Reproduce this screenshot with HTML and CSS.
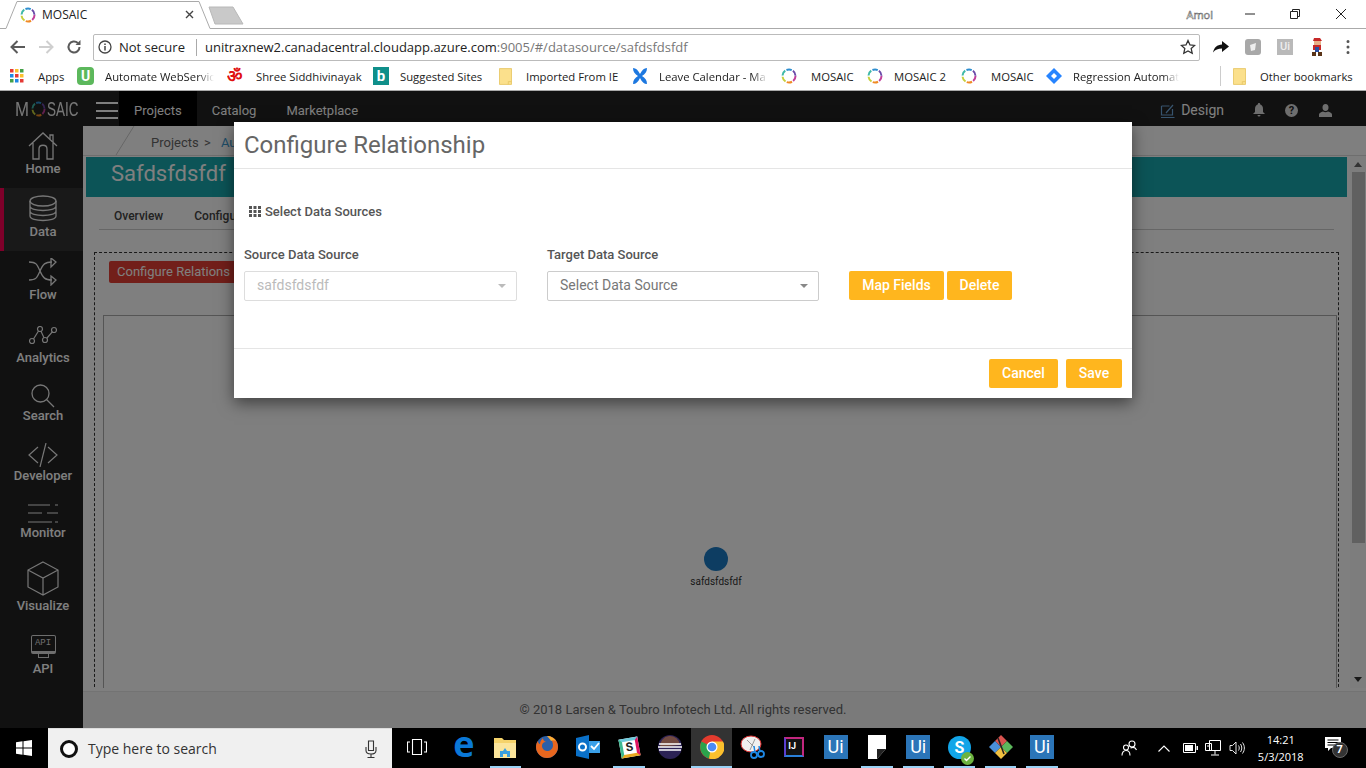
FILE: index.html
```html
<!DOCTYPE html>
<html lang="en">
<head>
    <meta charset="UTF-8">
    <title>MOSAIC</title>
    <link rel="stylesheet" href="styles.css">
</head>
<body>
    <svg class="defs" width="0" height="0">
        <symbol id="ring" viewBox="0 0 16 16">
            <g fill="none" stroke-width="2">
                <circle cx="8" cy="8" r="6.500" stroke="#c2409a" stroke-dasharray="5.500 35.500"/>
                <circle cx="8" cy="8" r="6.500" stroke="#f08a24" stroke-dasharray="5.500 35.500" stroke-dashoffset="-6.800"/>
                <circle cx="8" cy="8" r="6.500" stroke="#c6cf3a" stroke-dasharray="5.500 35.500" stroke-dashoffset="-13.600"/>
                <circle cx="8" cy="8" r="6.500" stroke="#3fb8a8" stroke-dasharray="5.500 35.500" stroke-dashoffset="-20.400"/>
                <circle cx="8" cy="8" r="6.500" stroke="#2f8fd0" stroke-dasharray="5.500 35.500" stroke-dashoffset="-27.200"/>
                <circle cx="8" cy="8" r="6.500" stroke="#6a4aa8" stroke-dasharray="5.500 35.500" stroke-dashoffset="-34"/>
            </g>
        </symbol>
        <symbol id="folder" viewBox="0 0 14 18">
            <path d="M.5 .5h13v17H.5z" fill="#fbe08c" stroke="#e8c868"/>
            <path d="M10 17.500v-3h3.500" fill="none" stroke="#e8c868"/>
        </symbol>
    </svg>

    <!-- browser window -->
    <header class="browser">
        <div class="tabstrip">
            <div class="tab">
                <svg class="tab-shape" width="207" height="29" viewBox="0 0 207 29"><path d="M0 28.500h1L12 1.500h182L205 28.500h2V29H0z" fill="#fff"/><path d="M0 28.500h1L12 1.500h182L205 28.500h2" fill="none" stroke="#aaa"/></svg>
                <svg class="tab-icon" width="16" height="16"><use href="#ring"/></svg>
                <span class="tab-title">MOSAIC</span>
                <svg class="tab-close" width="9" height="9" viewBox="0 0 9 9"><path d="M1 1l7 7M8 1L1 8" stroke="#444" stroke-width="1.400"/></svg>
            </div>
            <svg class="newtab" width="36" height="19" viewBox="0 0 36 19"><path d="M1 1h24l10 17H7z" fill="#c9c9c9" stroke="#b8b8b8"/></svg>
            <div class="window-controls">
                <span class="user-name">Amol</span>
                <svg width="12" height="12" viewBox="0 0 12 12" class="win-min"><path d="M1 6h10" stroke="#222"/></svg>
                <svg width="12" height="12" viewBox="0 0 12 12" class="win-max"><path d="M1.500 3.500h7v7h-7zM3.500 3.500v-2h7v7h-2" fill="none" stroke="#222"/></svg>
                <svg width="12" height="12" viewBox="0 0 12 12" class="win-close"><path d="M1 1l10 10M11 1L1 11" stroke="#222"/></svg>
            </div>
        </div>

        <div class="toolbar">
            <svg class="nav-arrow" width="16" height="14" viewBox="0 0 16 14"><path d="M15 7H2M7.500 1L1.500 7l6 6" fill="none" stroke="#5a5a5a" stroke-width="2"/></svg>
            <svg class="nav-arrow" width="16" height="14" viewBox="0 0 16 14"><path d="M1 7h13M8.500 1l6 6-6 6" fill="none" stroke="#cfcfcf" stroke-width="2"/></svg>
            <svg class="nav-arrow" width="16" height="16" viewBox="0 0 16 16"><path d="M13.500 8a5.500 5.500 0 1 1-1.700-4" fill="none" stroke="#5a5a5a" stroke-width="2"/><path d="M14.500 1v5h-5z" fill="#5a5a5a"/></svg>
            <div class="omnibox">
                <svg width="14" height="14" viewBox="0 0 14 14"><circle cx="7" cy="7" r="6" fill="none" stroke="#444" stroke-width="1.300"/><path d="M7 6v4.500M7 3.400v1.500" stroke="#444" stroke-width="1.500"/></svg>
                <span class="not-secure">Not secure</span>
                <span class="omni-sep"></span>
                <span class="url">unitraxnew2.canadacentral.cloudapp.azure.com<span class="url-rest">:9005/#/datasource/safdsfdsfdf</span></span>
                <svg class="omni-star" width="16" height="16" viewBox="0 0 16 16"><path d="M8 1.500l2 4.400 4.700.5-3.500 3.200 1 4.700L8 11.900l-4.200 2.400 1-4.700L1.300 6.400 6 5.900z" fill="none" stroke="#333" stroke-width="1.300"/></svg>
            </div>
            <div class="extensions">
                <svg width="16" height="12" viewBox="0 0 16 12"><path d="M9 0l7 5.500L9 11V7.500C5 7.500 2.500 8.500 0 11.500 1 6.500 4 3.800 9 3.500z" fill="#111"/></svg>
                <svg width="16" height="16" viewBox="0 0 16 16"><rect width="16" height="16" rx="3" fill="#a8a8a8"/><path d="M5 6l6-2-1 7-4 1z" fill="#eee"/></svg>
                <span class="ext-ui">Ui</span>
                <svg width="14" height="20" viewBox="0 0 14 20"><path d="M4 1h6l2 3H3z" fill="#c62828"/><path d="M4 4h7v4H4z" fill="#e8b088"/><path d="M3 8h8v5H3z" fill="#c62828"/><path d="M5 10h4v5H5z" fill="#2b4fa0"/><path d="M2 15h4v4H2zM8 15h4v4H8z" fill="#5a3418"/></svg>
                <svg width="4" height="14" viewBox="0 0 4 14"><path d="M2 0a1.500 1.500 0 1 1 0 3 1.500 1.500 0 1 1 0-3zM2 5.500a1.500 1.500 0 1 1 0 3 1.500 1.500 0 1 1 0-3zM2 11a1.500 1.500 0 1 1 0 3 1.500 1.500 0 1 1 0-3z" fill="#555"/></svg>
            </div>
        </div>

        <div class="bookmarks">
            <div class="bm">
                <svg width="14" height="14" viewBox="0 0 14 14">
                    <path d="M0 0h3.500v3.500H0z" fill="#e53935"/><path d="M5 0h3.500v3.500H5z" fill="#fbc02d"/><path d="M10 0h3.500v3.500H10z" fill="#43a047"/>
                    <path d="M0 5h3.500v3.500H0z" fill="#1e88e5"/><path d="M5 5h3.500v3.500H5z" fill="#e53935"/><path d="M10 5h3.500v3.500H10z" fill="#fbc02d"/>
                    <path d="M0 10h3.500v3.500H0z" fill="#43a047"/><path d="M5 10h3.500v3.500H5z" fill="#1e88e5"/><path d="M10 10h3.500v3.500H10z" fill="#e53935"/>
                </svg>
                <span class="bm-apps">Apps</span>
            </div>
            <div class="bm"><span class="bm-u">U</span><span class="fade fade-automate">Automate WebServic</span></div>
            <div class="bm"><span class="bm-om">ॐ</span><span>Shree Siddhivinayak</span></div>
            <div class="bm"><span class="bm-bing">b</span><span>Suggested Sites</span></div>
            <div class="bm"><svg width="13" height="17"><use href="#folder"/></svg><span class="bm-folder-text">Imported From IE</span></div>
            <div class="bm">
                <svg width="16" height="18" viewBox="0 0 16 18"><path d="M1 1c3 0 5 2 7 6 2-4 4-6 7-6 0 4-2 6-5 8 3 2 5 4 5 8-3 0-5-2-7-6-2 4-4 6-7 6 0-4 2-6 5-8C3 7 1 5 1 1z" fill="#1d78e0"/></svg>
                <span class="fade fade-leave">Leave Calendar - Ma</span>
            </div>
            <div class="bm"><svg width="16" height="16"><use href="#ring"/></svg><span class="bm-m">MOSAIC</span></div>
            <div class="bm"><svg width="16" height="16"><use href="#ring"/></svg><span>MOSAIC 2</span></div>
            <div class="bm"><svg width="16" height="16"><use href="#ring"/></svg><span class="bm-m">MOSAIC</span></div>
            <div class="bm">
                <svg width="16" height="16" viewBox="0 0 16 16"><path d="M8 0l8 8-8 8-8-8z" fill="#2684ff"/><path d="M8 5l3 3-3 3-3-3z" fill="#fff"/></svg>
                <span class="fade fade-regression">Regression Automat</span>
            </div>
            <span class="bm-sep"></span>
            <div class="bm"><svg width="13" height="17"><use href="#folder"/></svg><span class="bm-folder-text">Other bookmarks</span></div>
        </div>
    </header>

    <!-- application -->
    <div class="app">
        <nav class="navbar">
            <div class="brand">
                <span class="brand-m">M</span>
                <svg width="15" height="16" viewBox="0 0 16 16" preserveAspectRatio="none"><use href="#ring"/></svg>
                <span class="brand-saic">SAIC</span>
            </div>
            <div class="burger"><span></span><span></span><span></span></div>
            <a class="nav-link active">Projects</a>
            <a class="nav-link">Catalog</a>
            <a class="nav-link">Marketplace</a>
            <div class="nav-right">
                <svg width="15" height="15" viewBox="0 0 15 15"><path d="M1 14.500h13.500M1.500 3h8M1.500 3v9h11V6M6 10l7-8" fill="none" stroke="#6fa8dc" stroke-width="1.200"/></svg>
                <span class="design">Design</span>
                <svg class="bell" width="12" height="14" viewBox="0 0 12 14"><path d="M6 0a1 1 0 0 1 1 1.300C9 2 10 3.500 10 6v3l2 2H0l2-2V6c0-2.500 1-4 3-4.700A1 1 0 0 1 6 0zM4.500 12h3a1.500 1.500 0 0 1-3 0z" fill="#ddd"/></svg>
                <span class="help">?</span>
                <svg class="person" width="13" height="13" viewBox="0 0 13 13"><path d="M6.500 0C8.500 0 9.500 1.500 9.500 3.500S8.500 7 6.500 7 3.500 5.500 3.500 3.500 4.500 0 6.500 0zM4 7.500c1.500 1 3.500 1 5 0 2 .5 4 1.500 4 3V13H0v-2.500c0-1.500 2-2.500 4-3z" fill="#ddd"/></svg>
            </div>
        </nav>

        <div class="app-body">
            <aside class="sidebar">
                <a class="side-item">
                    <svg width="30" height="28" viewBox="0 0 30 28"><path d="M1 14L15 1l14 13M5 11v16h6V17c0-5 8-5 8 0v10h6V11" fill="none" stroke="#eee" stroke-width="1.300"/><path d="M22 7V3h3v7" fill="none" stroke="#eee" stroke-width="1.300"/></svg>
                    <span>Home</span>
                </a>
                <a class="side-item side-active">
                    <svg width="28" height="28" viewBox="0 0 28 28"><g fill="none" stroke="#eee" stroke-width="1.300"><ellipse cx="14" cy="6" rx="13" ry="5"/><path d="M1 6v5c0 6 26 6 26 0V6M1 11v5c0 6 26 6 26 0v-5M1 16v5c0 6 26 6 26 0v-5"/></g></svg>
                    <span>Data</span>
                </a>
                <a class="side-item">
                    <svg width="28" height="28" viewBox="0 0 28 28"><g fill="none" stroke="#eee" stroke-width="1.300"><path d="M0 4c7 0 8 2 11 9 3 7 5 9 12 9M0 22c7 0 8-2 11-9 3-7 5-9 12-9"/><path d="M22 0l5 4-5 5zM22 18l5 4-5 5z"/></g></svg>
                    <span>Flow</span>
                </a>
                <a class="side-item side-analytics">
                    <svg width="28" height="19" viewBox="0 0 28 19"><g fill="none" stroke="#eee" stroke-width="1.200"><circle cx="3" cy="15" r="2.500"/><circle cx="11" cy="3" r="2.500"/><circle cx="16" cy="14" r="2.500"/><circle cx="25" cy="4" r="2.500"/><path d="M4.500 13L9.500 5M12 5.300l3 6.500M18 12l5.500-6.300"/></g></svg>
                    <span>Analytics</span>
                </a>
                <a class="side-item side-search">
                    <svg width="24" height="24" viewBox="0 0 24 24"><g fill="none" stroke="#eee" stroke-width="1.300"><circle cx="9.500" cy="9.500" r="8.500"/><path d="M15.500 15.500L23 23"/></g></svg>
                    <span>Search</span>
                </a>
                <a class="side-item side-developer">
                    <svg width="30" height="24" viewBox="0 0 30 24"><path d="M10 4L1 12l9 8M20 4l9 8-9 8M18 0l-6 24" fill="none" stroke="#eee" stroke-width="1.200"/></svg>
                    <span>Developer</span>
                </a>
                <a class="side-item side-monitor">
                    <svg width="30" height="19" viewBox="0 0 30 19"><path d="M0 1h22M27 1h3M0 9h14M19 9h11M0 18h24M27 18h3" fill="none" stroke="#eee" stroke-width="1.200"/></svg>
                    <span>Monitor</span>
                </a>
                <a class="side-item side-visualize">
                    <svg width="32" height="35" viewBox="0 0 32 35"><path d="M16 1l15 8v17l-15 8-15-8V9zM1 9l15 8 15-8M16 17v17" fill="none" stroke="#eee" stroke-width="1.200"/></svg>
                    <span>Visualize</span>
                </a>
                <a class="side-item side-api">
                    <div class="api-icon">
                        <div class="api-screen">API</div>
                        <div class="api-stand"></div>
                    </div>
                    <span>API</span>
                </a>
            </aside>

            <div class="main">
                <div class="crumb">
                    <svg class="crumb-slash" width="20" height="29" viewBox="0 0 20 29"><path d="M19 0L1 29" stroke="#ccc"/></svg>
                    <span class="crumb-text">Projects &gt;</span>
                    <span class="crumb-link">Au</span>
                </div>
                <div class="scroll-area">
                    <div class="page">
                        <div class="banner">Safdsfdsfdf</div>
                        <div class="tabs">
                            <a class="tab-link">Overview</a>
                            <a class="tab-link">Configu</a>
                        </div>
                        <div class="relations">
                            <button class="btn-red">Configure Relations</button>
                            <div class="graph">
                                <div class="node">
                                    <span class="node-dot"></span>
                                    <span class="node-label">safdsfdsfdf</span>
                                </div>
                            </div>
                        </div>
                    </div>
                    <div class="scrollbar">
                        <span class="arrow-up"></span>
                        <span class="thumb"></span>
                        <span class="arrow-down"></span>
                    </div>
                </div>
                <footer class="footer">© 2018 Larsen &amp; Toubro Infotech Ltd. All rights reserved.</footer>
            </div>
        </div>

        <div class="backdrop"></div>

        <section class="modal">
            <div class="modal-header">Configure Relationship</div>
            <div class="modal-body">
                <div class="section-title">
                    <svg width="12" height="11" viewBox="0 0 12 11"><path d="M0 0h3v3H0zM4.500 0h3v3h-3zM9 0h3v3H9zM0 4h3v3H0zM4.500 4h3v3h-3zM9 4h3v3H9zM0 8h3v3H0zM4.500 8h3v3h-3zM9 8h3v3H9z" fill="#555"/></svg>
                    Select Data Sources
                </div>
                <div class="form-row">
                    <div class="field">
                        <label>Source Data Source</label>
                        <div class="select select-disabled">safdsfdsfdf<span class="caret"></span></div>
                    </div>
                    <div class="field">
                        <label>Target Data Source</label>
                        <div class="select">Select Data Source<span class="caret"></span></div>
                    </div>
                    <div class="row-buttons">
                        <button class="btn btn-map">Map Fields</button>
                        <button class="btn btn-delete">Delete</button>
                    </div>
                </div>
            </div>
            <div class="modal-footer">
                <button class="btn btn-cancel">Cancel</button>
                <button class="btn btn-save">Save</button>
            </div>
        </section>
    </div>

    <!-- windows taskbar -->
    <div class="taskbar">
        <div class="start">
            <svg width="16" height="16" viewBox="0 0 16 16"><path d="M0 2.300l6.500-1v6.200H0zM7.500 1.200L16 0v7.500H7.500zM0 8.500h6.500v6.200l-6.500-1zM7.500 8.500H16V16l-8.500-1.200z" fill="#fff"/></svg>
        </div>
        <div class="search">
            <span class="cortana"></span>
            <span class="search-text">Type here to search</span>
            <svg class="mic" width="12" height="18" viewBox="0 0 12 18"><path d="M3.500 1h5v9.500h-5zM1 7v3.500C1 13 3 14 6 14s5-1 5-3.500V7M6 14v3M2.500 17.500h7" fill="none" stroke="#333" stroke-width="1.100"/></svg>
        </div>
        <div class="task-cell task-view">
            <svg width="20" height="16" viewBox="0 0 20 16"><path d="M5.500 .500h9v15h-9zM3 3H.5v10H3M17 3h2.500v10H17" fill="none" stroke="#fff" stroke-width="1.100"/></svg>
        </div>
        <div class="task-cell"><span class="edge-e">e</span></div>
        <div class="task-cell running">
            <svg width="22" height="22" viewBox="0 0 22 22"><path d="M0 2h8l2 2h12v18H0z" fill="#f5d36b"/><path d="M0 7h22v15H0z" fill="#fbe59b"/><path d="M6 21v-6h3l2-3 2 3h3v6h-3v-3H9v3z" fill="#3aa0e0"/></svg>
        </div>
        <div class="task-cell">
            <svg width="22" height="24" viewBox="0 0 22 24"><circle cx="11" cy="12" r="11" fill="#2b5fa8"/><path d="M11 1c7 0 11 5 11 11s-5 11-11 11C5 23 0 18 0 12c0-3 1-5 2-6 0 2 1 3 2 3 0-3 2-5 3-6 0 2 1 3 3 4-3 0-4 2-4 4s2 5 5 5 6-2 6-6-3-8-6-9z" fill="#e8661e"/><path d="M11 1c4 0 7 2 9 5-2-1-4-1-5 0-1-2-3-4-4-5z" fill="#fbb034"/></svg>
        </div>
        <div class="task-cell">
            <svg width="24" height="24" viewBox="0 0 24 24"><path d="M0 3l13-3v24L0 21z" fill="#0a70c8"/><path d="M13 6h11v12H13z" fill="#3aa0e8"/><circle cx="6.500" cy="12" r="3.500" fill="none" stroke="#fff" stroke-width="2"/><path d="M15 11l3 3 5-6" fill="none" stroke="#fff" stroke-width="1.800"/></svg>
        </div>
        <div class="task-cell running">
            <span class="slack-tile"><span>S</span></span>
        </div>
        <div class="task-cell">
            <svg width="24" height="24" viewBox="0 0 24 24"><circle cx="12" cy="12" r="12" fill="#2c2255"/><path d="M2 12a10 10 0 0 1 20-2z" fill="#f7941e" opacity=".35"/><path d="M1 9h22M0 12h24M1 15h22" stroke="#fff" stroke-width="1.500"/></svg>
        </div>
        <div class="task-cell task-active">
            <svg width="24" height="24" viewBox="0 0 24 24"><circle cx="12" cy="12" r="12" fill="#e33b2e"/><path d="M12 12L1.500 6.500A12 12 0 0 0 9 23.600z" fill="#2ba24c"/><path d="M12 6.500h11A12 12 0 0 1 9 23.600z" fill="#fbc02d"/><circle cx="12" cy="12" r="5.500" fill="#fff"/><circle cx="12" cy="12" r="4.300" fill="#4a8bf5"/></svg>
        </div>
        <div class="task-cell">
            <svg width="26" height="26" viewBox="0 0 26 26"><ellipse cx="11" cy="10" rx="10" ry="8" fill="#f0f0f0" stroke="#d33"/><path d="M7 6l8 8M15 5l-5 11" stroke="#999"/><circle cx="14" cy="21" r="3" fill="none" stroke="#1e88e5" stroke-width="1.800"/><circle cx="21" cy="20" r="3" fill="none" stroke="#1e88e5" stroke-width="1.800"/><path d="M14 12l1 7M19 12l1 6" stroke="#1e88e5" stroke-width="1.500"/></svg>
        </div>
        <div class="task-cell"><span class="ij-tile"><span>IJ</span></span></div>
        <div class="task-cell"><span class="ui-tile">Ui</span></div>
        <div class="task-cell running">
            <svg width="18" height="24" viewBox="0 0 18 24"><path d="M0 0h18v14L10 24H0z" fill="#fff"/><path d="M9 24l9-10v10z" fill="#000"/><path d="M9 24v-10h9z" fill="#222"/></svg>
        </div>
        <div class="task-cell running"><span class="ui-tile">Ui</span></div>
        <div class="task-cell running">
            <span class="skype"><span>S</span></span>
            <svg class="skype-ok" width="13" height="13" viewBox="0 0 13 13"><circle cx="6.500" cy="6.500" r="6.500" fill="#6cb33f"/><path d="M3.500 6.500l2 2 4-4" fill="none" stroke="#fff" stroke-width="1.400"/></svg>
        </div>
        <div class="task-cell running">
            <svg width="26" height="26" viewBox="0 0 26 26"><path d="M13 1l6 6-6 6-6-6z" fill="#d9534f"/><path d="M1 13l6-6 6 6-6 6z" fill="#4a90d9"/><path d="M25 13l-6-6-6 6 6 6z" fill="#5cb85c"/><path d="M13 25l-6-6 6-6 6 6z" fill="#f0c040"/><path d="M10 4l6 16" stroke="#222" stroke-width="1.500"/></svg>
        </div>
        <div class="task-cell running"><span class="ui-tile">Ui</span></div>

        <div class="tray">
            <svg class="tray-people" width="17" height="16" viewBox="0 0 17 16"><g fill="none" stroke="#fff" stroke-width="1.100"><circle cx="11" cy="4" r="3"/><circle cx="5" cy="7.500" r="2.500"/><path d="M1 15.500c0-3 1.500-5 4-5s4 2 4 5M9.500 8c2.500-1 5-.5 6 2"/></g></svg>
            <svg class="tray-chevron" width="12" height="7" viewBox="0 0 12 7"><path d="M.5 6.500L6 1l5.500 5.500" fill="none" stroke="#fff" stroke-width="1.100"/></svg>
            <svg class="tray-battery" width="15" height="10" viewBox="0 0 15 10"><path d="M.5 .5h12v9H.5z" fill="none" stroke="#fff"/><path d="M2 2h8v6H2zM13.500 3H15v4h-1.500z" fill="#fff"/></svg>
            <svg class="tray-net" width="16" height="16" viewBox="0 0 16 16"><path d="M4.500 .500h11v10h-11zM.5 3.500h6v7H.5zM10 10.500v4M6 15h8" fill="none" stroke="#fff"/><path d="M2 6h3" stroke="#fff"/></svg>
            <svg class="tray-sound" width="16" height="14" viewBox="0 0 16 14"><path d="M1 4.500h2.500L7 1v12L3.500 9.500H1zM9.500 4.500c1 1.500 1 3.500 0 5M11.500 3c1.700 2.500 1.700 5.500 0 8M13.500 1.500c2.500 3.500 2.500 7.500 0 11" fill="none" stroke="#fff" stroke-width=".9"/></svg>
            <div class="clock"><span>14:21</span><span>5/3/2018</span></div>
            <div class="notify">
                <svg width="16" height="15" viewBox="0 0 16 15"><path d="M0 0h16v11H6l-3 3v-3H0z" fill="#fff"/><path d="M2.500 3h11M2.500 5.500h11M2.500 8h11" stroke="#000"/></svg>
                <span class="notify-badge">7</span>
            </div>
        </div>
    </div>
</body>
</html>
```

FILE: styles.css
```css
* {
    box-sizing: border-box;
}

html, body {
    height: 100%;
}

body {
    margin: 0;
    width: 1366px;
    height: 768px;
    overflow: hidden;
    display: flex;
    flex-direction: column;
    font-family: "Open Sans", "Noto Sans", sans-serif;
    background: #fff;
}

.defs {
    position: absolute;
}

/* browser window */
.browser {
    height: 91px;
    flex: none;
    color: #222;
}

.tabstrip {
    height: 29px;
    display: flex;
    align-items: flex-start;
    border-bottom: 1px solid #aaa;
}

.tab {
    position: relative;
    width: 207px;
    height: 29px;
    margin-left: 5px;
    display: flex;
    align-items: center;
    padding: 0 0 0 15px;
}

.tab-shape {
    position: absolute;
    left: 0;
    top: 0;
}

.tab-icon, .tab-title, .tab-close {
    position: relative;
}

.tab-title {
    margin-left: 6px;
    font-size: 12px;
    width: 126px;
}

.tab-close {
    margin-left: 17px;
}

.newtab {
    margin: 6px 0 0 -4px;
}

.window-controls {
    margin-left: auto;
    display: flex;
    align-items: center;
    height: 28px;
}

.user-name {
    font-size: 11px;
    color: #fff;
    -webkit-text-stroke: .5px #555;
    margin-right: 31px;
}

.win-min {
    margin-right: 33px;
}

.win-max {
    margin-right: 34px;
}

.win-close {
    margin-right: 19px;
}

.toolbar {
    height: 33px;
    display: flex;
    align-items: center;
    padding: 3px 0 0 10px;
}

.nav-arrow {
    margin-right: 12px;
}

.nav-arrow:nth-child(3) {
    margin-right: 11px;
}

.omnibox {
    width: 1107px;
    height: 27px;
    border: 1px solid #bbb;
    border-radius: 2px;
    display: flex;
    align-items: center;
    padding-left: 4px;
    font-size: 13px;
}

.not-secure {
    margin-left: 7px;
    width: 67px;
    white-space: nowrap;
}

.omni-sep {
    width: 1px;
    height: 17px;
    background: #aaa;
    margin: 0 8px 0 10px;
}

.url {
    color: #222;
    white-space: nowrap;
}

.url-rest {
    color: #777;
}

.omni-star {
    margin-left: auto;
    margin-right: 3px;
}

.extensions {
    display: grid;
    grid-template-columns: 32px 32px 32px 32px 30px;
    justify-items: center;
    align-items: center;
    margin-left: 5px;
}

.ext-ui {
    width: 16px;
    height: 16px;
    background: #b9b9b9;
    color: #eee;
    font: 500 11px Roboto, sans-serif;
    text-align: center;
    line-height: 16px;
}

.bookmarks {
    height: 29px;
    border-bottom: 1px solid #aaa;
    display: grid;
    grid-template-columns: 67px 150px 146px 126px 133px 149px 86px 94px 85px 174px 13px auto;
    align-items: center;
    padding-left: 10px;
    font-size: 11.300px;
}

.bm {
    display: flex;
    align-items: center;
    gap: 11px;
    white-space: nowrap;
}

.bm-apps {
    margin-left: 3px;
}

.bm-folder-text {
    margin-left: 3px;
}

.bm-m {
    margin-left: 3px;
}

.bm-u {
    width: 17px;
    height: 18px;
    background: #5cb85c;
    color: #fff;
    border-radius: 4px;
    text-align: center;
    font: 700 14px/18px Roboto, sans-serif;
}

.bm-om {
    width: 18px;
    color: #e01010;
    font: 700 17px/18px "DejaVu Sans", sans-serif;
    overflow: hidden;
}

.bm-bing {
    width: 16px;
    height: 18px;
    background: #0f8f8a;
    color: #fff;
    text-align: center;
    font: 700 15px/18px Roboto, sans-serif;
}

.fade {
    -webkit-mask-image: linear-gradient(to right, #000 85%, transparent);
    mask-image: linear-gradient(to right, #000 85%, transparent);
}

.fade-automate {
    width: 109px;
}

.fade-leave {
    width: 109px;
}

.fade-regression {
    width: 106px;
}

.bm-sep {
    width: 1px;
    height: 20px;
    background: #ccc;
}

/* application */
.app {
    position: relative;
    flex: none;
    height: 637px;
    display: flex;
    flex-direction: column;
    font-family: Roboto, sans-serif;
}

.navbar {
    height: 35px;
    flex: none;
    background: #222;
    display: flex;
    align-items: stretch;
    color: #fff;
    font-size: 13px;
}

.brand {
    width: 81px;
    padding-left: 15px;
    display: flex;
    align-items: center;
    font: 400 21px "Liberation Sans", sans-serif;
    color: #eee;
}

.brand svg {
    flex: none;
    margin: 1px 1px 0 2px;
}

.brand-m {
    width: 14px;
    flex: none;
    display: inline-block;
    transform: scaleX(.8);
    transform-origin: left;
}

.brand-saic {
    width: 32px;
    flex: none;
    display: inline-block;
    white-space: nowrap;
    transform: scaleX(.64);
    transform-origin: left;
}

.burger {
    width: 38px;
    padding: 11px 1px 0 15px;
}

.burger span {
    display: block;
    width: 22px;
    height: 2px;
    background: #fff;
    margin-bottom: 5.500px;
}

.nav-link {
    display: flex;
    align-items: center;
    padding: 3px 15px 0;
    color: #fff;
}

.nav-link.active {
    background: #000;
}

.nav-right {
    margin-left: auto;
    display: flex;
    align-items: center;
    padding: 3px 34px 0 0;
    font-size: 14px;
}

.design {
    margin-left: 6px;
    margin-right: 29px;
}

.help {
    width: 13px;
    height: 13px;
    border-radius: 50%;
    background: #ddd;
    color: #222;
    margin: 0 21px 0 20px;
    font: 700 11px/13px Roboto, sans-serif;
    text-align: center;
}

.app-body {
    flex: 1;
    display: flex;
    min-height: 0;
}

.sidebar {
    width: 83px;
    flex: none;
    background: #222;
    margin-top: -1px;
}

.side-item {
    height: 63px;
    display: flex;
    flex-direction: column;
    align-items: center;
    justify-content: flex-end;
    padding: 0 0 12px 3px;
    color: #fff;
    font-size: 13px;
    font-weight: 500;
    gap: 1px;
}

.side-active {
    background: #333;
    border-left: 4px solid #ff0055;
    padding: 0 1px 12px 0;
}

.side-analytics {
    gap: 5px;
}

.side-search {
    height: 58px;
    gap: 0;
}

.side-developer {
    height: 60px;
}

.side-monitor {
    height: 57px;
    gap: 2px;
}

.side-visualize {
    height: 73px;
    gap: 2px;
}

.side-api {
    gap: 3px;
}

.api-icon {
    width: 25px;
}

.api-screen {
    height: 19px;
    border: 1px solid #ddd;
    border-bottom-width: 3px;
    border-radius: 2px;
    font: 400 9px/14px "Liberation Mono", monospace;
    text-align: center;
    color: #ddd;
}

.api-stand {
    width: 11px;
    height: 4px;
    margin: 0 auto;
    border-left: 1px solid #ddd;
    border-right: 1px solid #ddd;
    border-bottom: 1px solid #ddd;
}

.main {
    flex: 1;
    min-width: 0;
    display: flex;
    flex-direction: column;
    background: #fff;
}

.crumb {
    position: relative;
    height: 30px;
    flex: none;
    padding-left: 68px;
    padding-top: 9px;
    font-size: 13px;
    word-spacing: 2px;
    color: #666;
    border-bottom: 1px solid #ddd;
}

.crumb-slash {
    position: absolute;
    left: 32px;
    top: 0;
}

.crumb-link {
    margin-left: 5px;
    color: #3d9ad1;
}

.scroll-area {
    flex: 1;
    display: flex;
    min-height: 0;
    overflow: hidden;
}

.page {
    flex: 1;
    min-width: 0;
    padding-top: 1px;
    height: 532px;
    overflow: hidden;
}

.banner {
    height: 40px;
    margin: 0 3px;
    padding-left: 25px;
    background: #18a9ae;
    color: #fff;
    font-size: 22px;
    line-height: 34px;
}

.tabs {
    height: 33px;
    margin: 0 16px;
    padding: 12px 0 0 15px;
    border-bottom: 1px solid #ccc;
    display: flex;
    gap: 31px;
    font-size: 12px;
    font-weight: 500;
    color: #444;
}

.relations {
    margin: 22px 11px 0;
    border: 1px dashed #333;
    border-bottom: 0;
    height: 440px;
    padding: 8px 1px 0 8px;
}

.btn-red {
    display: block;
    margin-left: 6px;
    height: 22px;
    width: 150px;
    border: 0;
    border-radius: 2px;
    background: #e53e34;
    color: #fff;
    font: 400 13px Roboto, sans-serif;
    text-align: left;
    padding: 0 0 2px 8px;
}

.graph {
    position: relative;
    margin-top: 32px;
    height: 373px;
    border: 1px solid #aaa;
    border-bottom: 0;
}

.node {
    position: absolute;
    left: 572px;
    top: 231px;
    width: 80px;
    display: flex;
    flex-direction: column;
    align-items: center;
    gap: 5px;
}

.node-dot {
    width: 24px;
    height: 24px;
    border-radius: 50%;
    background: #1b7bc4;
}

.node-label {
    font-size: 10px;
    color: #333;
}

.scrollbar {
    width: 16px;
    height: 532px;
    flex: none;
    background: #fafafa;
    display: flex;
    flex-direction: column;
    align-items: center;
    padding-top: 6px;
}

.arrow-up {
    border: 4px solid transparent;
    border-top: 0;
    border-bottom: 5px solid #666;
}

.thumb {
    width: 13px;
    height: 371px;
    margin-top: 5px;
    background: #c1c1c1;
}

.arrow-down {
    margin-top: auto;
    margin-bottom: 6px;
    border: 4px solid transparent;
    border-bottom: 0;
    border-top: 5px solid #333;
}

.footer {
    height: 37px;
    flex: none;
    background: #f5f5f5;
    border-top: 1px solid #e6e6e6;
    color: #666;
    font-size: 13px;
    text-align: center;
    padding: 10px 83px 0 0;
}

.backdrop {
    position: absolute;
    inset: 0;
    background: rgba(0, 0, 0, .5);
}

.modal {
    position: absolute;
    left: 234px;
    top: 31px;
    width: 898px;
    height: 276px;
    background: #fff;
    box-shadow: 0 5px 15px rgba(0, 0, 0, .5);
    display: flex;
    flex-direction: column;
}

.modal-header {
    height: 47px;
    flex: none;
    padding: 9px 0 0 10px;
    font-size: 24px;
    color: #666;
    border-bottom: 1px solid #e5e5e5;
}

.modal-body {
    flex: 1;
    padding: 35px 10px 0;
}

.section-title {
    display: flex;
    align-items: center;
    gap: 4px;
    padding-left: 5px;
    height: 15px;
    font-size: 13px;
    font-weight: 500;
    color: #555;
}

.form-row {
    display: flex;
    margin-top: 27px;
}

.field {
    width: 273px;
    margin-right: 30px;
}

.field + .field {
    width: 272px;
}

.field label {
    display: block;
    height: 15px;
    margin-bottom: 10px;
    font-size: 13px;
    font-weight: 500;
    color: #555;
    line-height: 17px;
}

.select {
    position: relative;
    height: 30px;
    padding-left: 12px;
    border: 1px solid #ccc;
    border-radius: 2px;
    font-size: 14px;
    line-height: 26px;
    color: #777;
}

.select-disabled {
    border-color: #ddd;
    color: #bbb;
}

.caret {
    position: absolute;
    right: 10px;
    top: 12px;
    border: 4px solid transparent;
    border-bottom: 0;
    border-top: 4px solid #888;
}

.select-disabled .caret {
    border-top-color: #bbb;
}

.row-buttons {
    display: flex;
    gap: 3px;
    padding-top: 25px;
}

.btn {
    height: 29px;
    border: 0;
    border-radius: 2px;
    background: #ffb61e;
    color: #fff;
    font: 500 14px Roboto, sans-serif;
    padding: 0 0 2px;
}

.btn-map {
    width: 95px;
}

.btn-delete {
    width: 65px;
}

.modal-footer {
    height: 50px;
    flex: none;
    border-top: 1px solid #e5e5e5;
    display: flex;
    justify-content: flex-end;
    gap: 8px;
    padding: 10px 10px 0 0;
}

.btn-cancel {
    width: 69px;
}

.btn-save {
    width: 56px;
}

/* taskbar */
.taskbar {
    height: 40px;
    flex: none;
    background: #000;
    display: flex;
    color: #fff;
}

.start {
    width: 48px;
    display: flex;
    align-items: center;
    justify-content: center;
}

.search {
    width: 344px;
    background: #f0f0f0;
    border-top: 1px solid #ddd;
    display: flex;
    align-items: center;
    padding-left: 12px;
    color: #333;
    font-size: 14px;
}

.cortana {
    width: 18px;
    height: 18px;
    border-radius: 50%;
    border: 3px solid #111;
    background: #fff;
}

.search-text {
    margin-left: 10px;
}

.mic {
    margin-left: auto;
    margin-right: 15px;
}

.task-cell {
    position: relative;
    width: 41.300px;
    display: flex;
    align-items: center;
    justify-content: center;
    padding-bottom: 2px;
    flex: none;
}

.task-view {
    margin: 0 6px 0 4px;
}

.running::after, .task-active::after {
    content: "";
    position: absolute;
    left: 5px;
    right: 5px;
    bottom: 0;
    height: 2px;
    background: #99d1f5;
}

.task-active {
    background: #333;
}

.task-active::after {
    left: 0;
    right: 0;
}

.edge-e {
    color: #0a78d7;
    font: 700 36px/32px "Open Sans", sans-serif;
    margin-top: -6px;
}

.slack-tile {
    width: 19px;
    height: 19px;
    background: #fff;
    border-left: 3px solid #3eb991;
    border-top: 3px solid #6ecadc;
    border-right: 3px solid #e01563;
    border-bottom: 3px solid #e9a820;
    transform: rotate(-10deg);
    color: #222;
    font: 700 12px/13px Roboto, sans-serif;
    text-align: center;
}

.ij-tile {
    width: 20px;
    height: 20px;
    border: 2px solid #c2277f;
    border-left-color: #5a3fd0;
    border-bottom-color: #2a7fd8;
    background: #111;
    color: #fff;
    font: 700 9px/14px Roboto, sans-serif;
    padding-left: 2px;
}

.ui-tile {
    width: 24px;
    height: 24px;
    background: #2b75b8;
    color: #fff;
    font: 400 18px/24px Roboto, sans-serif;
    text-align: center;
}

.skype {
    width: 23px;
    height: 23px;
    border-radius: 50%;
    background: #12a5e8;
    color: #fff;
    font: 700 16px/23px Roboto, sans-serif;
    text-align: center;
}

.skype-ok {
    position: absolute;
    right: 6px;
    bottom: 3px;
}

.tray {
    flex: 1;
    display: flex;
    align-items: center;
}

.tray-people {
    margin-left: 58px;
}

.tray-chevron {
    margin-left: 20px;
}

.tray-battery {
    margin-left: 13px;
}

.tray-net {
    margin-left: 7px;
}

.tray-sound {
    margin-left: 8px;
}

.clock {
    width: 64px;
    margin-left: 4px;
    display: flex;
    flex-direction: column;
    align-items: center;
    gap: 3px;
    font-size: 11px;
    line-height: 14px;
}

.notify {
    position: relative;
    margin-left: 12px;
    margin-top: -4px;
}

.notify-badge {
    position: absolute;
    left: 7px;
    top: 7px;
    width: 16px;
    height: 16px;
    border-radius: 50%;
    background: #333;
    border: 1px solid #666;
    font: 700 11px/14px Roboto, sans-serif;
    text-align: center;
}
```
